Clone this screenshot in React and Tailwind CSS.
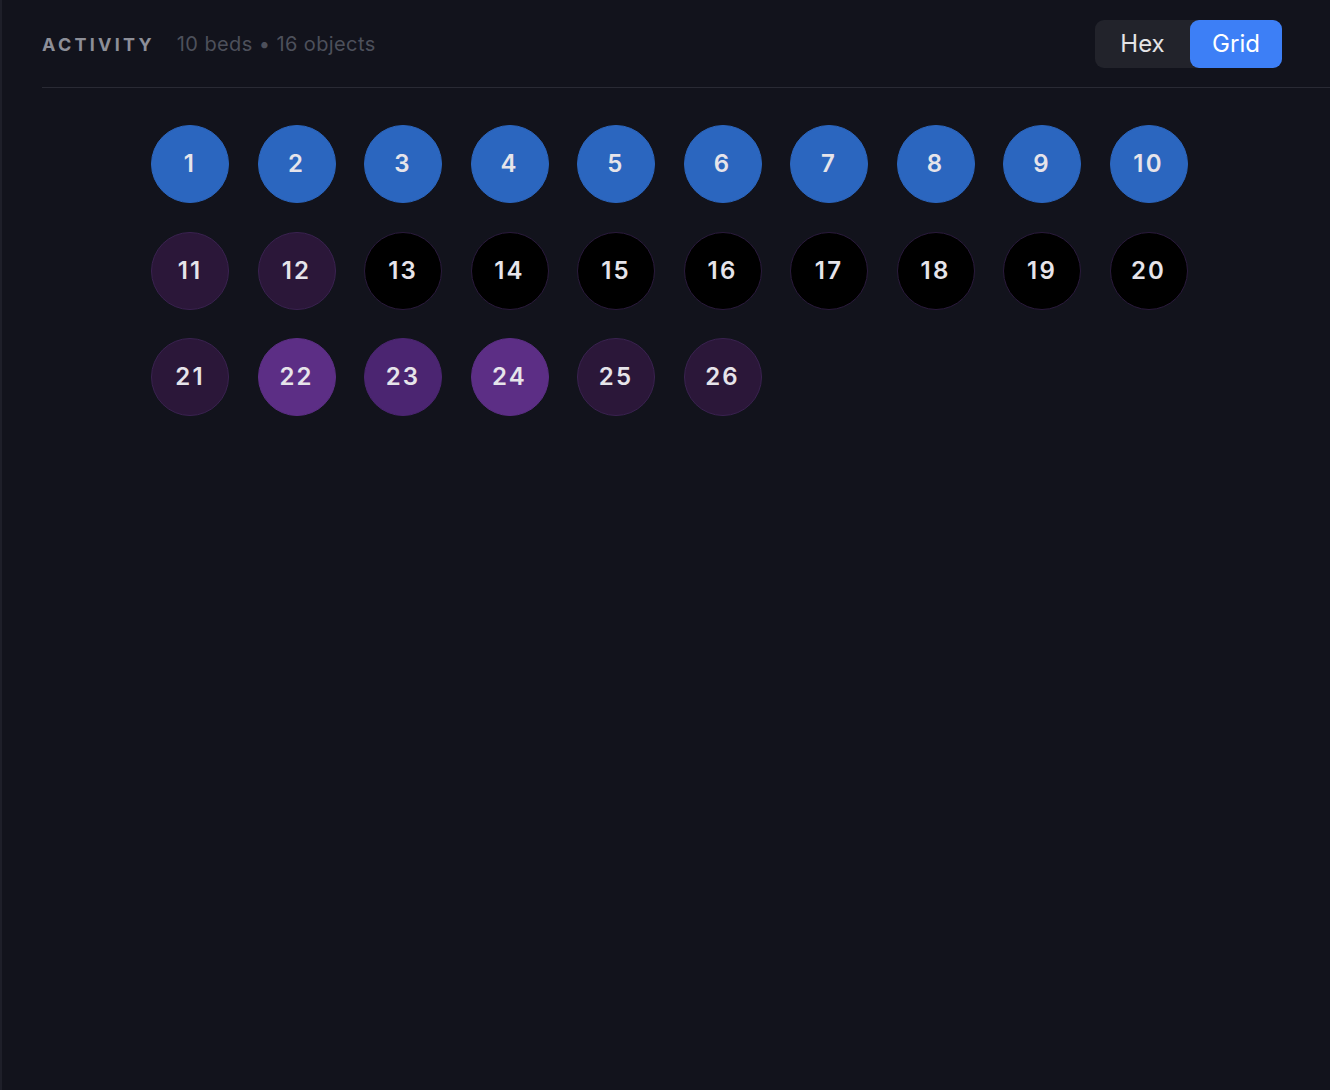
import React from 'react';

// bed status colours, one per circle
const beds = [
  ...Array(10).fill('blue'),
  'plum', 'plum',
  ...Array(8).fill('black'),
  'plum', 'violet', 'grape', 'violet', 'plum', 'plum',
];

const tone = {
  blue: 'bg-[#2b66bf] border-[#2b66bf]',
  plum: 'bg-[#2b1739] border-[#3a2250]',
  black: 'bg-black border-[#2a1a3c]',
  violet: 'bg-[#5c2e85] border-[#5c2e85]',
  grape: 'bg-[#4b2571] border-[#4b2571]',
};

function Bed({ n, kind }) {
  return (
    <div className={`w-[78px] h-[78px] rounded-full border flex items-center justify-center text-[24px] font-semibold tracking-[0.09em] text-[#e6e4ea] ${tone[kind]}`}>
      {n}
    </div>
  );
}

export default function App() {
  return (
    <div className="min-h-screen bg-[#12131c] border-l-2 border-[#1e1f29] font-['Inter',sans-serif]">
      <div className="pl-[40px]">
        <div className="flex items-center justify-between pr-[48px] pt-[20px] pb-[19px] border-b border-[#292a34]">
          <div className="flex items-baseline gap-[22px]">
            <span className="text-[18px] font-bold tracking-[0.18em] text-[#8d8f98]">ACTIVITY</span>
            <span className="text-[20px] tracking-[0.02em] text-[#4d505b]">10 beds • 16 objects</span>
          </div>
          <div className="flex h-[48px] rounded-[9px] bg-[#22232b] text-[24px]">
            <button className="w-[95px] text-[#e4e4e6]">Hex</button>
            <button className="w-[92px] rounded-[9px] bg-[#3d7ff6] text-white">Grid</button>
          </div>
        </div>

        <div className="pl-[109px] pt-[37px]">
          <div className="grid grid-cols-[repeat(10,78px)] gap-[28.5px]">
            {beds.map((k, i) => (
              <Bed key={i} n={i + 1} kind={k} />
            ))}
          </div>
        </div>
      </div>
    </div>
  );
}
